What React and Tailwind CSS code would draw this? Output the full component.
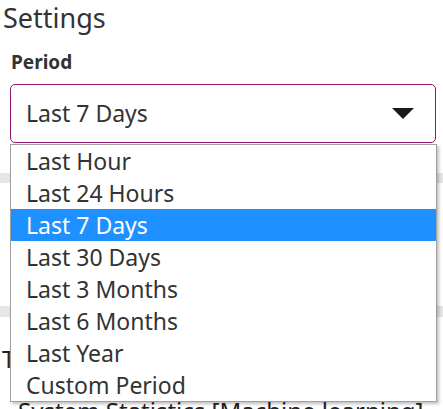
import { useState } from 'react'

const periods = [
  'Last Hour',
  'Last 24 Hours',
  'Last 7 Days',
  'Last 30 Days',
  'Last 3 Months',
  'Last 6 Months',
  'Last Year',
  'Custom Period',
]

export default function App() {
  const [selected, setSelected] = useState('Last 7 Days')

  return (
    <div className="relative h-[409px] w-[443px] overflow-hidden bg-white font-['Noto_Sans',sans-serif] text-[#333]">
      <h2 className="pl-[3px] pt-[1px] text-[27px] leading-[34px] text-[#333]">Settings</h2>
      <div className="pl-[11px] pt-[14px] text-[19px] font-bold leading-[26px] text-[#333]">Period</div>

      <div className="relative mx-[10px] mt-[9px]">
        <button className="flex h-[59px] w-[426px] items-center justify-between rounded-[5px] border-[1.5px] border-[#8e1670] bg-white pl-[15px] pr-[20px] text-[23px] text-[#333]">
          <span>{selected}</span>
          <svg width="24" height="13" viewBox="0 0 24 13">
            <path d="M1 1 H23 L12 12 Z" fill="#1a1a1a" />
          </svg>
        </button>

        <ul className="absolute left-0 top-[60px] z-10 w-[427px] border border-[#a0a0a0] bg-white shadow-[2px_2px_3px_rgba(0,0,0,0.25)]">
          {periods.map((p) => (
            <li
              key={p}
              onClick={() => setSelected(p)}
              className={
                p === selected
                  ? 'h-[32px] bg-[#1e90ff] pl-[15px] text-[23px] leading-[33px] text-white'
                  : 'h-[32px] pl-[15px] text-[23px] leading-[33px] text-[#333]'
              }
            >
              {p}
            </li>
          ))}
        </ul>
      </div>

      <div className="mt-[30px] h-[10px] bg-[#e6e6e6]" />
      <div className="h-[123px]" />
      <div className="h-[11px] bg-[#e6e6e6]" />
      <h3 className="pl-[2px] pt-[26px] text-[24px] leading-[32px] text-[#222]">Top Usage</h3>
      <h3 className="pl-[18px] pt-[20px] text-[24px] leading-[32px] text-[#222]">System Statistics [Machine learning]</h3>
    </div>
  )
}
